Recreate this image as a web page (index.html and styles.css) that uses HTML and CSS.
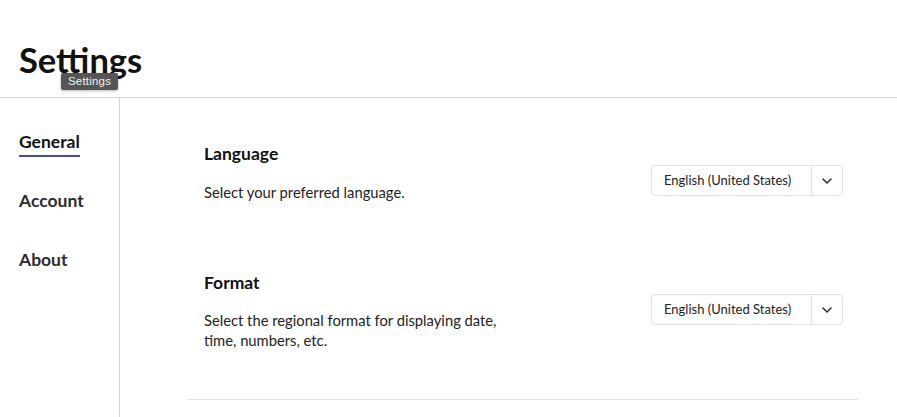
FILE: index.html
```html
<!DOCTYPE html>
<html lang="en">
<head>
<meta charset="utf-8">
<title>Settings</title>
<link rel="stylesheet" href="styles.css">
</head>
<body>
<header class="header">
  <h1 class="title">Settings</h1>
  <div class="tooltip">Settings</div>
</header>
<div class="main">
  <nav class="sidebar">
    <a class="nav-item active">General</a>
    <a class="nav-item">Account</a>
    <a class="nav-item">About</a>
  </nav>
  <div class="content">
    <section class="setting">
      <div class="setting-text">
        <h2 class="setting-title">Language</h2>
        <p class="setting-desc">Select your preferred language.</p>
      </div>
      <div class="picker">
        <span class="picker-value">English (United States)</span>
        <span class="picker-btn">
          <svg width="10" height="6" viewBox="0 0 10 6"><path d="M1 1l4 4 4-4" fill="none" stroke="#333" stroke-width="1.6" stroke-linecap="round" stroke-linejoin="round"/></svg>
        </span>
      </div>
    </section>
    <section class="setting setting-last">
      <div class="setting-text">
        <h2 class="setting-title">Format</h2>
        <p class="setting-desc">Select the regional format for displaying date,<br>time, numbers, etc.</p>
      </div>
      <div class="picker">
        <span class="picker-value">English (United States)</span>
        <span class="picker-btn">
          <svg width="10" height="6" viewBox="0 0 10 6"><path d="M1 1l4 4 4-4" fill="none" stroke="#333" stroke-width="1.6" stroke-linecap="round" stroke-linejoin="round"/></svg>
        </span>
      </div>
    </section>
  </div>
</div>
</body>
</html>
```
FILE: styles.css
```css
* { box-sizing: border-box; }
html, body { margin: 0; padding: 0; background: #fff; }
body {
  font-family: Lato, "Noto Sans", sans-serif;
  color: #222;
  height: 417px;
  overflow: hidden;
}
.header {
  position: relative;
  height: 98px;
  border-bottom: 1px solid #d6d6d6;
  padding: 38px 0 0 19px;
}
.title {
  margin: 0;
  font-size: 34.5px;
  line-height: 44px;
  font-weight: 700;
  color: #111;
}
.tooltip {
  position: absolute;
  left: 61px;
  top: 73px;
  height: 17px;
  padding: 0 7px;
  background: #555;
  color: #f2f2f2;
  font-family: "Liberation Sans", Arial, sans-serif;
  font-size: 11.5px;
  line-height: 17px;
  letter-spacing: 0.2px;
  border-radius: 2px;
  box-shadow: 0 1px 3px rgba(0,0,0,0.3);
}
.main {
  display: flex;
  height: 319px;
}
.sidebar {
  width: 120px;
  border-right: 1px solid #d6d6d6;
  padding: 32px 0 0 19px;
  display: flex;
  flex-direction: column;
  align-items: flex-start;
  gap: 32px;
}
.nav-item {
  font-size: 17.5px;
  font-weight: 700;
  line-height: 24px;
  color: #2c2c2c;
  padding-bottom: 1px;
  border-bottom: 2px solid transparent;
}
.nav-item.active {
  color: #111;
  border-bottom-color: #4b4ca0;
}
.content {
  margin-left: 68px;
  width: 670px;
  padding-top: 45px;
}
.setting {
  display: flex;
  justify-content: space-between;
  align-items: flex-start;
  padding: 0 15px 0 16px;
  margin-bottom: 70px;
}
.setting-last {
  margin-bottom: 0;
  padding-bottom: 49px;
  border-bottom: 1px solid #e2e2e2;
}
.setting-title {
  margin: 0;
  font-size: 17.5px;
  line-height: 22px;
  font-weight: 700;
  color: #111;
}
.setting-desc {
  margin: 17px 0 0;
  font-size: 14.75px;
  line-height: 20px;
  color: #222;
}
.setting-last .setting-desc {
  margin-top: 16px;
}
.picker {
  margin-top: 22px;
  display: flex;
  width: 192px;
  height: 31px;
  border: 1px solid #e1e1e1;
  border-radius: 4px;
}
.picker-value {
  width: 160px;
  border-right: 1px solid #e1e1e1;
  padding-left: 12px;
  font-size: 13px;
  line-height: 29px;
  color: #222;
}
.picker-btn {
  flex: 1;
  display: flex;
  align-items: center;
  justify-content: center;
}
```
